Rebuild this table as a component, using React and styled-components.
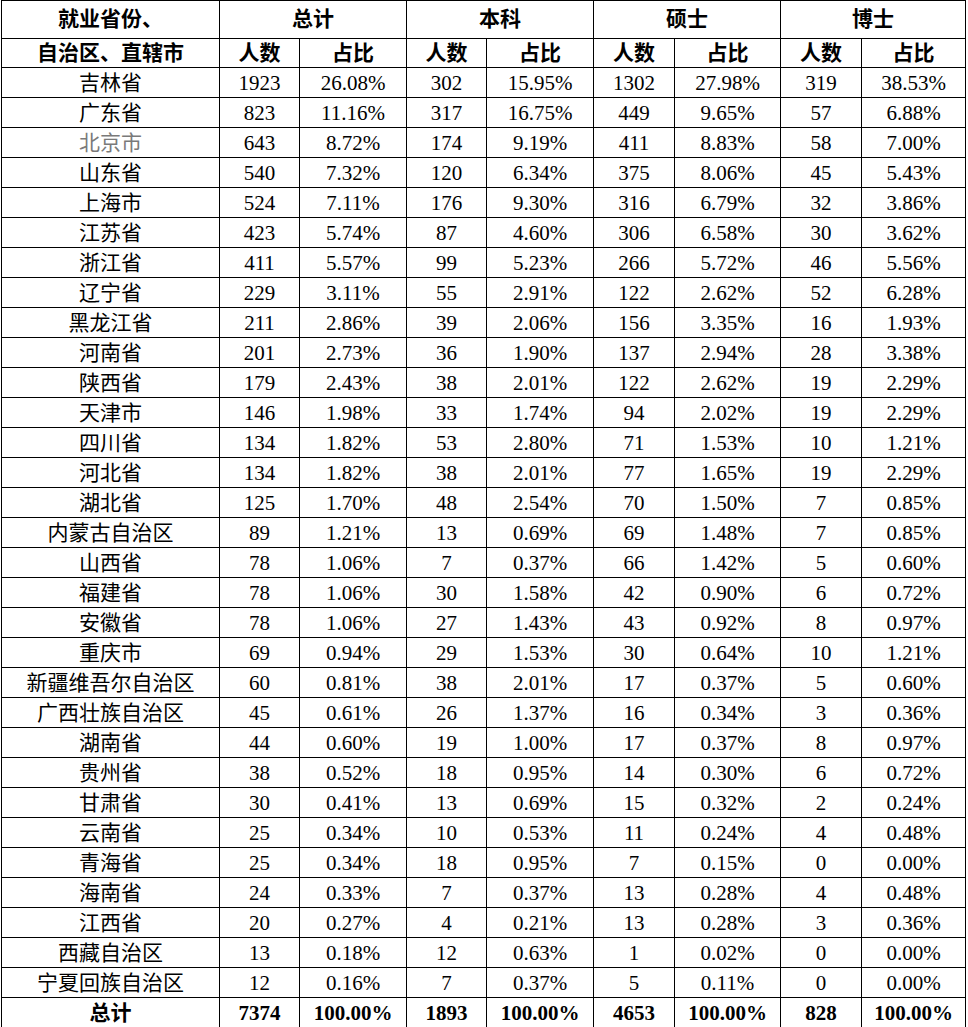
import React from 'react'
import styled, { createGlobalStyle } from 'styled-components'

const GlobalStyle = createGlobalStyle`
  html, body {
    margin: 0;
    padding: 0;
    background: #fff;
  }
  body {
    font-family: "Liberation Serif", "Noto Sans CJK SC", serif;
    color: #000;
  }
`

const COL_WIDTHS = [218, 80, 107, 80, 107, 81, 106, 81, 104]

const rows = [
  ['吉林省', 1923, '26.08%', 302, '15.95%', 1302, '27.98%', 319, '38.53%'],
  ['广东省', 823, '11.16%', 317, '16.75%', 449, '9.65%', 57, '6.88%'],
  ['北京市', 643, '8.72%', 174, '9.19%', 411, '8.83%', 58, '7.00%'],
  ['山东省', 540, '7.32%', 120, '6.34%', 375, '8.06%', 45, '5.43%'],
  ['上海市', 524, '7.11%', 176, '9.30%', 316, '6.79%', 32, '3.86%'],
  ['江苏省', 423, '5.74%', 87, '4.60%', 306, '6.58%', 30, '3.62%'],
  ['浙江省', 411, '5.57%', 99, '5.23%', 266, '5.72%', 46, '5.56%'],
  ['辽宁省', 229, '3.11%', 55, '2.91%', 122, '2.62%', 52, '6.28%'],
  ['黑龙江省', 211, '2.86%', 39, '2.06%', 156, '3.35%', 16, '1.93%'],
  ['河南省', 201, '2.73%', 36, '1.90%', 137, '2.94%', 28, '3.38%'],
  ['陕西省', 179, '2.43%', 38, '2.01%', 122, '2.62%', 19, '2.29%'],
  ['天津市', 146, '1.98%', 33, '1.74%', 94, '2.02%', 19, '2.29%'],
  ['四川省', 134, '1.82%', 53, '2.80%', 71, '1.53%', 10, '1.21%'],
  ['河北省', 134, '1.82%', 38, '2.01%', 77, '1.65%', 19, '2.29%'],
  ['湖北省', 125, '1.70%', 48, '2.54%', 70, '1.50%', 7, '0.85%'],
  ['内蒙古自治区', 89, '1.21%', 13, '0.69%', 69, '1.48%', 7, '0.85%'],
  ['山西省', 78, '1.06%', 7, '0.37%', 66, '1.42%', 5, '0.60%'],
  ['福建省', 78, '1.06%', 30, '1.58%', 42, '0.90%', 6, '0.72%'],
  ['安徽省', 78, '1.06%', 27, '1.43%', 43, '0.92%', 8, '0.97%'],
  ['重庆市', 69, '0.94%', 29, '1.53%', 30, '0.64%', 10, '1.21%'],
  ['新疆维吾尔自治区', 60, '0.81%', 38, '2.01%', 17, '0.37%', 5, '0.60%'],
  ['广西壮族自治区', 45, '0.61%', 26, '1.37%', 16, '0.34%', 3, '0.36%'],
  ['湖南省', 44, '0.60%', 19, '1.00%', 17, '0.37%', 8, '0.97%'],
  ['贵州省', 38, '0.52%', 18, '0.95%', 14, '0.30%', 6, '0.72%'],
  ['甘肃省', 30, '0.41%', 13, '0.69%', 15, '0.32%', 2, '0.24%'],
  ['云南省', 25, '0.34%', 10, '0.53%', 11, '0.24%', 4, '0.48%'],
  ['青海省', 25, '0.34%', 18, '0.95%', 7, '0.15%', 0, '0.00%'],
  ['海南省', 24, '0.33%', 7, '0.37%', 13, '0.28%', 4, '0.48%'],
  ['江西省', 20, '0.27%', 4, '0.21%', 13, '0.28%', 3, '0.36%'],
  ['西藏自治区', 13, '0.18%', 12, '0.63%', 1, '0.02%', 0, '0.00%'],
  ['宁夏回族自治区', 12, '0.16%', 7, '0.37%', 5, '0.11%', 0, '0.00%'],
]

const total = ['总计', 7374, '100.00%', 1893, '100.00%', 4653, '100.00%', 828, '100.00%']

const groups = ['总计', '本科', '硕士', '博士']

const Table = styled.table`
  border-collapse: collapse;
  table-layout: fixed;
  width: 965px;
  margin-left: 1px;
  font-size: 21px;
`

const HeadRow = styled.tr`
  height: ${(p) => p.$h}px;
`

const HeadCell = styled.th`
  border: 1px solid #000;
  padding: ${(p) => p.$pt || 0}px 0 0;
  font-weight: bold;
  text-align: center;
  vertical-align: middle;
  line-height: 27px;
  white-space: nowrap;
`

const BodyRow = styled.tr`
  height: 30px;
`

const Cell = styled.td`
  border: 1px solid #000;
  padding: 2px 0 0;
  text-align: center;
  vertical-align: middle;
  line-height: 27px;
  white-space: nowrap;
  color: ${(p) => (p.$muted ? '#7a7a7a' : '#000')};
  font-weight: ${(p) => (p.$bold ? 'bold' : 'normal')};
`

const TotalRow = styled.tr`
  height: 28px;
`

export default function App() {
  return (
    <>
      <GlobalStyle />
      <Table>
        <colgroup>
          {COL_WIDTHS.map((w, i) => (
            <col key={i} style={{ width: w }} />
          ))}
        </colgroup>
        <thead>
          <HeadRow $h={38}>
            <HeadCell>就业省份、</HeadCell>
            {groups.map((g) => (
              <HeadCell key={g} colSpan={2}>{g}</HeadCell>
            ))}
          </HeadRow>
          <HeadRow $h={29}>
            <HeadCell $pt={1}>自治区、直辖市</HeadCell>
            {groups.map((g) => (
              <React.Fragment key={g}>
                <HeadCell $pt={1}>人数</HeadCell>
                <HeadCell $pt={1}>占比</HeadCell>
              </React.Fragment>
            ))}
          </HeadRow>
        </thead>
        <tbody>
          {rows.map((r) => (
            <BodyRow key={r[0]}>
              {r.map((v, i) => (
                <Cell key={i} $muted={i === 0 && r[0] === '北京市'}>{v}</Cell>
              ))}
            </BodyRow>
          ))}
          <TotalRow>
            {total.map((v, i) => (
              <Cell key={i} $bold>{v}</Cell>
            ))}
          </TotalRow>
        </tbody>
      </Table>
    </>
  )
}
